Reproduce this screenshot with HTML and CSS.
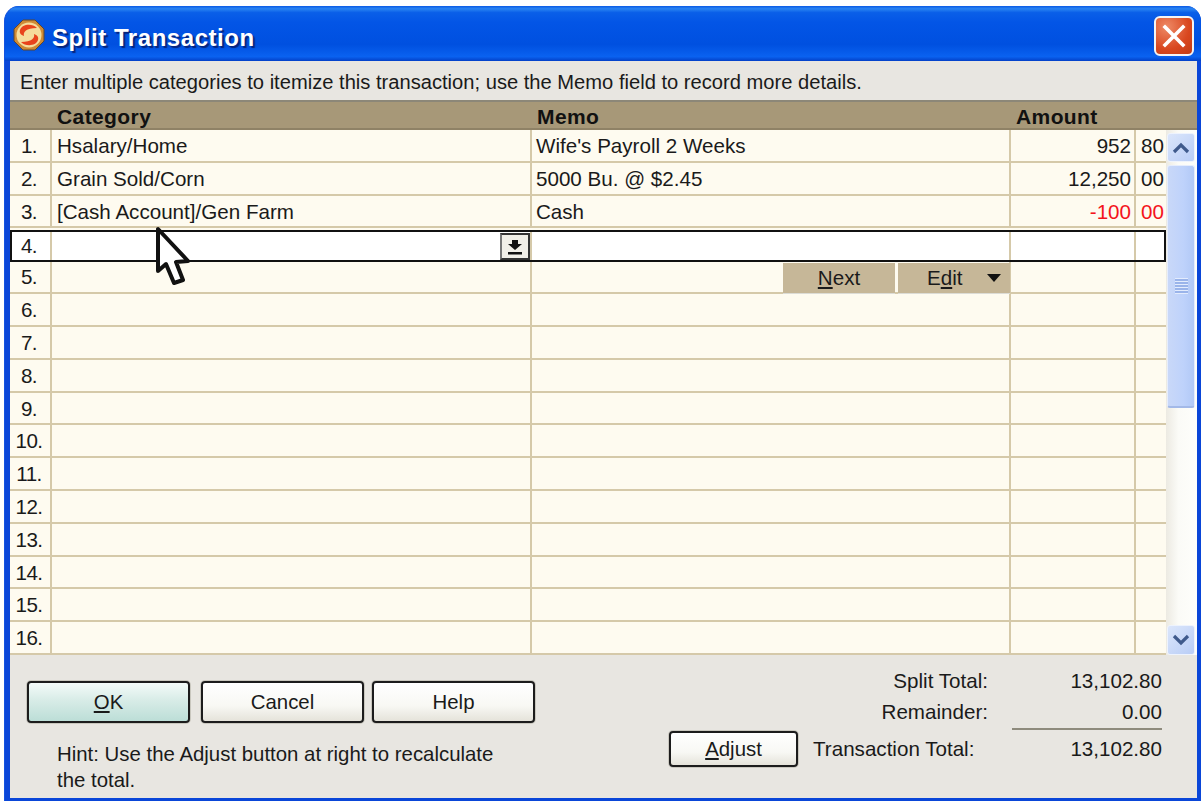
FILE: index.html
```html
<!DOCTYPE html>
<html lang="en">
<head>
<meta charset="utf-8">
<title>Split Transaction</title>
<link rel="stylesheet" href="styles.css">
</head>
<body>
<div class="window">
  <header class="titlebar">
    <svg class="app-icon" width="32" height="32" viewBox="0 0 32 32">
      <path d="M10 1h12l9 9v12l-9 9H10l-9-9V10z" fill="#cf8a35" stroke="#5f4630"/>
      <circle cx="16" cy="16" r="12.5" fill="#f5dc9c"/>
      <path d="M24 9C19 4 9 5 7 11c-1 3 1 5 4 6-1-4 2-8 13-8z" fill="#e8431c"/>
      <path d="M8 23c5 5 15 4 17-2 1-3-1-5-4-6 1 4-2 8-13 8z" fill="#e8431c"/>
    </svg>
    <h1 class="title">Split Transaction</h1>
    <button class="close" aria-label="Close">
      <svg width="36" height="36" viewBox="0 0 36 36"><path d="M9 9l18 18M27 9L9 27" stroke="#fff" stroke-width="3.6" fill="none" stroke-linecap="square"/></svg>
    </button>
  </header>
  <div class="client">
    <p class="intro">Enter multiple categories to itemize this transaction; use the Memo field to record more details.</p>
    <div class="head">
      <span></span><span>Category</span><span>Memo</span><span>Amount</span>
    </div>
    <div class="grid-wrap">
      <div class="rows">
        <div class="row"><div class="num">1.</div><div class="cell">Hsalary/Home</div><div class="cell">Wife's Payroll 2 Weeks</div><div class="cell amt">952</div><div class="cell cents">80</div></div>
        <div class="row"><div class="num">2.</div><div class="cell">Grain Sold/Corn</div><div class="cell">5000 Bu. @ $2.45</div><div class="cell amt">12,250</div><div class="cell cents">00</div></div>
        <div class="row"><div class="num">3.</div><div class="cell">[Cash Account]/Gen Farm</div><div class="cell">Cash</div><div class="cell amt neg">-100</div><div class="cell cents neg">00</div></div>
        <div class="row active"><div class="num">4.</div><div class="cell drop-cell"><button class="drop" aria-label="Open list"><svg width="20" height="20" viewBox="0 0 20 20"><path d="M7 3h6v4h4l-7 6-7-6h4zM3 15h14v2.4H3z" fill="#111"/></svg></button></div><div class="cell"></div><div class="cell"></div><div class="cell"></div></div>
        <div class="row"><div class="num">5.</div><div class="cell"></div><div class="cell action-cell"><button class="action"><span><u>N</u>ext</span></button><button class="action edit"><span>E<u>d</u>it</span><svg class="caret" width="14" height="8" viewBox="0 0 14 8"><path d="M0 0h14L7 8z" fill="#111"/></svg></button></div><div class="cell"></div><div class="cell"></div></div>
        <div class="row"><div class="num">6.</div><div class="cell"></div><div class="cell"></div><div class="cell"></div><div class="cell"></div></div>
        <div class="row"><div class="num">7.</div><div class="cell"></div><div class="cell"></div><div class="cell"></div><div class="cell"></div></div>
        <div class="row"><div class="num">8.</div><div class="cell"></div><div class="cell"></div><div class="cell"></div><div class="cell"></div></div>
        <div class="row"><div class="num">9.</div><div class="cell"></div><div class="cell"></div><div class="cell"></div><div class="cell"></div></div>
        <div class="row"><div class="num">10.</div><div class="cell"></div><div class="cell"></div><div class="cell"></div><div class="cell"></div></div>
        <div class="row"><div class="num">11.</div><div class="cell"></div><div class="cell"></div><div class="cell"></div><div class="cell"></div></div>
        <div class="row"><div class="num">12.</div><div class="cell"></div><div class="cell"></div><div class="cell"></div><div class="cell"></div></div>
        <div class="row"><div class="num">13.</div><div class="cell"></div><div class="cell"></div><div class="cell"></div><div class="cell"></div></div>
        <div class="row"><div class="num">14.</div><div class="cell"></div><div class="cell"></div><div class="cell"></div><div class="cell"></div></div>
        <div class="row"><div class="num">15.</div><div class="cell"></div><div class="cell"></div><div class="cell"></div><div class="cell"></div></div>
        <div class="row"><div class="num">16.</div><div class="cell"></div><div class="cell"></div><div class="cell"></div><div class="cell"></div></div>
      </div>
      <div class="scrollbar">
        <div class="sb-btn"><svg width="18" height="12" viewBox="0 0 18 12"><path d="M2 10l7-7 7 7" fill="none" stroke="#3f5a8c" stroke-width="3.2"/></svg></div>
        <div class="sb-thumb"><span class="grip"></span></div>
        <div class="sb-track"></div>
        <div class="sb-btn down"><svg width="18" height="12" viewBox="0 0 18 12"><path d="M2 2l7 7 7-7" fill="none" stroke="#3f5a8c" stroke-width="3.2"/></svg></div>
      </div>
    </div>
    <footer class="footer">
      <div class="foot-left">
        <div class="buttons">
          <button class="btn default"><u>O</u>K</button>
          <button class="btn">Cancel</button>
          <button class="btn">Help</button>
        </div>
        <p class="hint">Hint: Use the Adjust button at right to recalculate the total.</p>
      </div>
      <div class="foot-right">
        <div class="total-line"><span class="lbl">Split Total:</span><span class="val">13,102.80</span></div>
        <div class="total-line second"><span class="lbl">Remainder:</span><span class="val ruled">0.00</span></div>
        <div class="total-line last"><button class="btn adjust"><u>A</u>djust</button><span class="lbl tt">Transaction Total:</span><span class="val">13,102.80</span></div>
      </div>
    </footer>
  </div>
</div>
<svg class="pointer" width="38" height="62" viewBox="0 0 38 62">
  <path d="M3 3v42l8-7 8 19 9-3-7-18 12-1z" fill="#fff" stroke="#111" stroke-width="4" stroke-linejoin="round"/>
</svg>
</body>
</html>
```
FILE: styles.css
```css
* { box-sizing: border-box; }
html, body { margin: 0; height: 100%; background: #fff; }
body {
  padding: 6px 0 0 4px;
  font-family: "Liberation Sans", Arial, sans-serif;
  font-size: 20.6px;
  color: #1a1a1a;
  overflow: hidden;
}
button { font: inherit; color: inherit; padding: 0; }
u { text-underline-offset: 2px; }

.window {
  height: 795px;
  display: flex;
  flex-direction: column;
  border-radius: 15px 15px 0 0;
  background: #0a46d8;
  padding: 0 4px 3px 5px;
  border-left: 1px solid #1453e0;
}

/* caption bar */
.titlebar {
  height: 55px;
  margin: 0 -4px 0 -5px;
  padding: 0 7px 0 8px;
  display: flex;
  align-items: center;
  border-radius: 15px 15px 0 0;
  background: linear-gradient(#0a5ae6 0, #2a84f2 5%, #0a5fe8 12%, #0355e6 30%, #0050e0 70%, #0a62f0 92%, #0340c8 100%);
}
.app-icon { flex: none; margin-top: 2px; }
.title {
  margin: 8px 0 0 7px;
  font-size: 24px;
  font-weight: bold;
  letter-spacing: .55px;
  color: #fff;
  text-shadow: 2px 2px 1px #06247c;
}
.close {
  margin: 5px 0 0 auto;
  width: 40px;
  height: 40px;
  display: flex;
  align-items: center;
  justify-content: center;
  border: 2px solid #f4f4f4;
  border-radius: 6px;
  background: radial-gradient(circle at 30% 25%, #ee8a66, #d9471f 60%, #c23a14);
}

.client { flex: 1; display: flex; flex-direction: column; background: #e8e6e1; }

.intro {
  margin: 0;
  height: 41px;
  padding: 8px 0 0 10px;
  font-size: 20.15px;
  border-bottom: 2px solid #8c8778;
  line-height: 26px;
  white-space: nowrap;
}

/* register grid */
.head {
  height: 28px;
  display: grid;
  grid-template-columns: 47px 480px 479px 1fr;
  background: #a79878;
  font-weight: bold;
  font-size: 21px;
  letter-spacing: .4px;
  line-height: 30px;
  color: #111;
  border-bottom: 2px solid #8f8266;
}
.grid-wrap { height: 525px; display: flex; background: #fefbf0; }
.rows { flex: 1; display: grid; grid-template-rows: repeat(16, 1fr); min-width: 0; }
.row {
  display: grid;
  grid-template-columns: 42px 480px 479px 125px 30px;
  border-bottom: 2px solid #d5c9a9;
  background: #fefbf0;
  min-height: 0;
}
.num, .cell { border-right: 2px solid #d5c9a9; padding-top: 1px; line-height: 30px; white-space: nowrap; min-width: 0; }
.num { text-align: center; padding-right: 2px; letter-spacing: -.6px; }
.cell { padding-left: 4px; }
.cell:nth-child(2) { padding-left: 5px; }
.cell:last-child { border-right: 0; }
.amt { text-align: right; padding-right: 3px; }
.cents { padding-left: 5px; }
.neg { color: #f4141c; }

/* row being edited */
.row.active {
  position: relative;
  margin: 2px 0 -1px;
  background: #fff;
}
.row.active::after {
  content: "";
  position: absolute;
  inset: 0 0 -2px 0;
  border: 2px solid #111;
  pointer-events: none;
}
.drop-cell { display: flex; justify-content: flex-end; align-items: center; }
.drop-cell.cell { padding: 2px 0 0; }
.drop {
  width: 30px;
  height: 27px;
  display: flex;
  align-items: center;
  justify-content: center;
  background: #f1efe8;
  border: 2px solid #333;
  border-left-color: #777;
}
.action-cell.cell { display: flex; justify-content: flex-end; gap: 3px; padding: 2px 0 0; }
.action {
  width: 112px;
  margin-bottom: -1px;
  border: 0;
  background: #c6b798;
  box-shadow: 0 1px 0 #dcdcd6;
  line-height: 28px;
  display: flex;
  align-items: center;
  justify-content: center;
}
.action.edit { margin-right: -1px; padding-left: 29px; justify-content: flex-start; gap: 24px; }

/* scrollbar */
.scrollbar {
  width: 31px;
  flex: none;
  display: flex;
  flex-direction: column;
  padding: 3px 2px 0 1px;
  background: linear-gradient(90deg, #eceae2, #fbfbf7 40%, #fefefb);
}
.sb-btn {
  height: 29px;
  flex: none;
  display: flex;
  align-items: center;
  justify-content: center;
  border-radius: 3px;
  background: linear-gradient(135deg, #dbe6fb, #b9cdf6);
  border: 1px solid #eef3fd;
}
.sb-btn.down { height: 30px; }
.sb-thumb {
  height: 243px;
  margin-top: 3px;
  flex: none;
  display: flex;
  align-items: center;
  justify-content: center;
  border-radius: 3px;
  border: 1px solid #e6edfc;
  border-bottom: 2px solid #a3b9e8;
  background: linear-gradient(90deg, #c9d8f8, #bed2fb 60%, #b2c9f6);
}
.grip { width: 13px; height: 16px; background: repeating-linear-gradient(#e3ecfd 0 1px, #9ab4ea 1px 3px); }
.sb-track { flex: 1; }

/* bottom panel */
.footer { flex: 1; display: flex; justify-content: space-between; }
.foot-left { padding: 26px 0 0 17px; width: 540px; }
.buttons { display: flex; gap: 8px; }
.btn {
  width: 163px;
  height: 42px;
  border: 2px solid #1c1c1c;
  border-radius: 4px;
  background: linear-gradient(#fff 0, #f8f8f4 60%, #e5e3da 100%);
  font-size: 20.4px;
  box-shadow: 0 0 0 1px #c9c7be;
}
.btn.default { margin-right: 3px; background: linear-gradient(#f4fbf9 0, #d8ece7 45%, #bcded7 100%); }
.hint { margin: 18px 0 0 30px; width: 450px; font-size: 20.4px; line-height: 26px; }
.foot-right { padding: 10px 35px 0 0; width: 540px; display: flex; flex-direction: column; align-items: flex-end; }
.total-line { display: flex; height: 32px; line-height: 30px; align-items: center; }
.total-line.second { height: 33px; align-items: flex-start; }
.lbl { width: 180px; text-align: right; }
.val { width: 150px; margin-left: 24px; text-align: right; white-space: nowrap; }
.second .lbl { line-height: 29px; }
.ruled { height: 33px; line-height: 29px; border-bottom: 2px solid #8e8b7d; }
.total-line.last { height: 38px; width: 100%; justify-content: flex-end; }
.adjust { width: 129px; height: 36px; margin-right: 15px; }
.tt { width: 175px; white-space: nowrap; text-align: left; }

/* mouse pointer resting over the grid */
.pointer { position: absolute; left: 155px; top: 226px; }
```
